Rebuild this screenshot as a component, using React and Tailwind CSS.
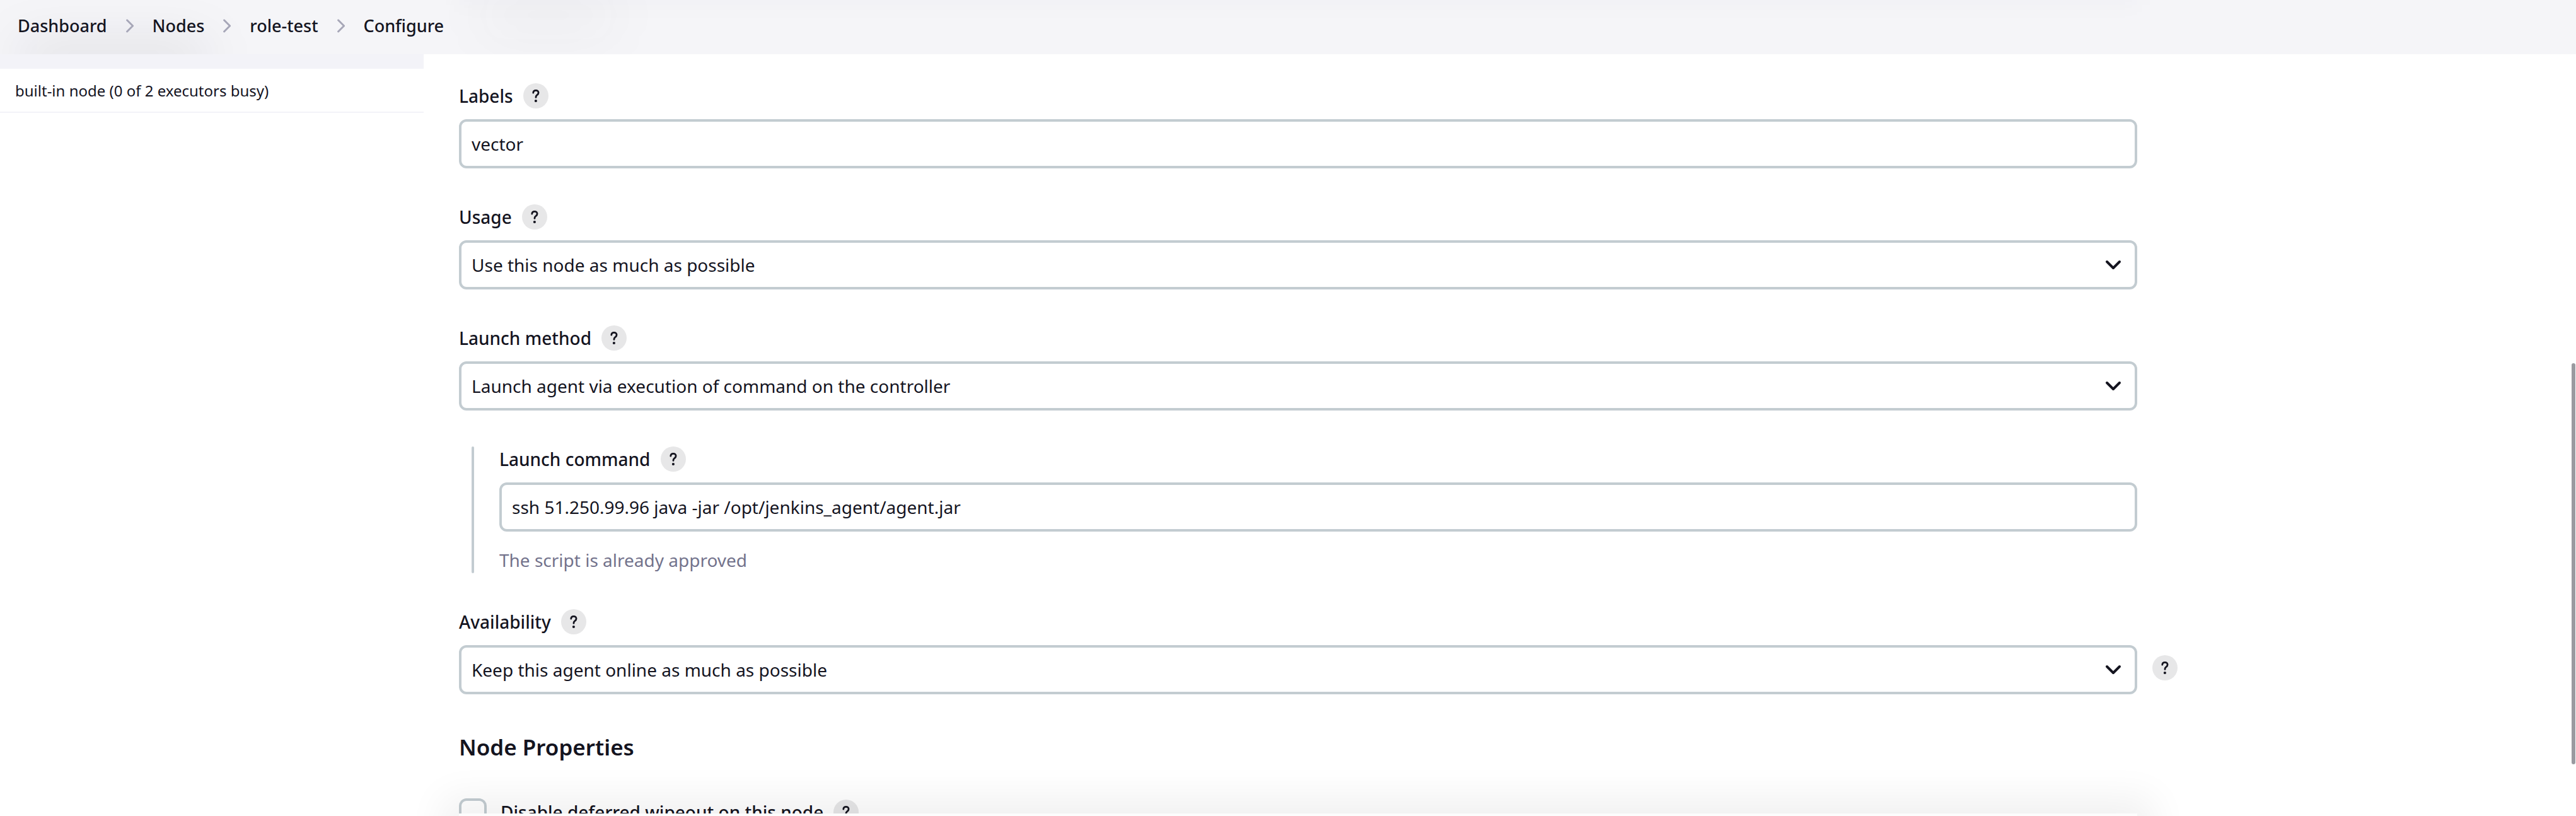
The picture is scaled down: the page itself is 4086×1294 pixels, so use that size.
import React from "react";

function HelpButton({ topic }) {
  return (
    <button
      type="button"
      aria-label={`Help for ${topic}`}
      className="flex size-10 shrink-0 items-center justify-center rounded-full bg-[#14141f]/10 text-[#14141f]"
    >
      <svg viewBox="0 0 40 40" className="size-10" fill="none" aria-hidden="true">
        <path
          d="M15.8 15.2c0-2.3 1.7-3.9 4.1-3.9 2.4 0 4.2 1.5 4.2 3.7 0 1.7-.8 2.6-2.2 3.6-1.4 1-1.9 1.7-1.9 3.2v.6"
          stroke="currentColor"
          strokeWidth="2.8"
          strokeLinecap="round"
          strokeLinejoin="round"
        />
        <circle cx="19.9" cy="28" r="2.1" fill="currentColor" />
      </svg>
    </button>
  );
}

function Field({ id, label, children }) {
  return (
    <div className="flex w-full max-w-[2662px] flex-col gap-[17px]">
      <div className="flex h-10 items-center gap-4">
        <label htmlFor={id} className="font-medium">
          {label}
        </label>
        <HelpButton topic={label} />
      </div>
      {children}
    </div>
  );
}

const boxClass =
  "h-[78px] w-full appearance-none rounded-xl border-4 border-[#c3ccd1] bg-white px-4 outline-none";

function TextInput({ id, value }) {
  return <input id={id} type="text" defaultValue={value} className={boxClass} />;
}

function SelectBox({ id, value }) {
  return (
    <div className="relative">
      <select id={id} className={boxClass}>
        <option>{value}</option>
      </select>
      <svg
        viewBox="0 0 28 18"
        className="pointer-events-none absolute top-[30px] right-6 h-[18px] w-7"
        fill="none"
        aria-hidden="true"
      >
        <path
          d="M4 4l10 10L24 4"
          stroke="currentColor"
          strokeWidth="4"
          strokeLinecap="round"
          strokeLinejoin="round"
        />
      </svg>
    </div>
  );
}

const crumbs = ["Dashboard", "Nodes", "role-test", "Configure"];

function Breadcrumbs() {
  return (
    <header className="relative z-10 h-[86px] shrink-0 overflow-hidden bg-[#f5f5f8]">
      <div className="absolute top-[72px] left-[30px] h-10 w-[300px] rounded-full bg-[#14141f]/12 blur-2xl" />
      <div className="absolute -top-4 left-[760px] h-20 w-[220px] rounded-full bg-[#14141f]/3 blur-2xl" />
      <div className="absolute -top-8 left-[728px] h-10 w-[2662px] bg-[#14141f]/2 blur-lg" />
      <nav aria-label="Breadcrumb" className="relative flex h-[82px] items-center px-7">
        <ol className="flex items-center gap-[30px] text-[27px] font-medium">
          {crumbs.map((name, i) => (
            <li key={name} className="flex items-center gap-[30px]">
              {i > 0 && (
                <svg viewBox="0 0 12 24" className="h-6 w-3" fill="none" aria-hidden="true">
                  <path
                    d="M1.600 3l9 9-9 9"
                    stroke="#a7a7b8"
                    strokeWidth="3"
                    strokeLinecap="round"
                    strokeLinejoin="round"
                  />
                </svg>
              )}
              <a href="#">{name}</a>
            </li>
          ))}
        </ol>
      </nav>
    </header>
  );
}

export default function App() {
  return (
    <div className="relative flex h-screen flex-col overflow-hidden bg-white font-['Noto_Sans',sans-serif] text-[28px] leading-[42px] text-[#14141f]">
      <Breadcrumbs />
      <div className="flex min-h-0 flex-1">
        <aside className="w-[672px] shrink-0">
          <div className="h-[23px] bg-[#f3f3f8]" />
          <div className="flex h-[70px] items-center border-b-2 border-[#f3f3f8] px-6 pt-0.5 text-2xl">
            <a href="#">built-in node (0 of 2 executors busy)</a>
          </div>
        </aside>
        <main className="min-w-0 flex-1 overflow-hidden">
          <form className="flex flex-col gap-[57px] pt-[46px] pl-14">
            <Field id="labels" label="Labels">
              <TextInput id="labels" value="vector" />
            </Field>
            <Field id="usage" label="Usage">
              <SelectBox id="usage" value="Use this node as much as possible" />
            </Field>
            <Field id="launch-method" label="Launch method">
              <SelectBox
                id="launch-method"
                value="Launch agent via execution of command on the controller"
              />
            </Field>
            <div className="flex max-w-[2662px] gap-10 pl-5">
              <div className="w-1 shrink-0 rounded-full bg-[#c3ccd1]" />
              <div className="flex-1">
                <Field id="launch-command" label="Launch command">
                  <TextInput
                    id="launch-command"
                    value="ssh 51.250.99.96 java -jar /opt/jenkins_agent/agent.jar"
                  />
                </Field>
                <p className="mt-6 text-[#73738c]">The script is already approved</p>
              </div>
            </div>
            <div className="flex items-end gap-6">
              <Field id="availability" label="Availability">
                <SelectBox id="availability" value="Keep this agent online as much as possible" />
              </Field>
              <div className="flex h-[84px] items-center">
                <HelpButton topic="availability options" />
              </div>
            </div>
            <section>
              <h2 className="text-[35px] leading-[54px] font-semibold">Node Properties</h2>
              <div className="mt-[54px] flex h-11 items-center">
                <input
                  id="wipeout"
                  type="checkbox"
                  className="size-11 appearance-none rounded-xl border-4 border-[#c3ccd1] bg-white"
                />
                <label htmlFor="wipeout" className="mr-4 ml-[22px] font-medium">
                  Disable deferred wipeout on this node
                </label>
                <HelpButton topic="deferred wipeout" />
              </div>
            </section>
          </form>
        </main>
      </div>
      <div className="pointer-events-none absolute inset-x-0 bottom-0 flex h-24 items-start overflow-hidden pt-[92px] pl-[728px]">
        <div className="h-24 w-full max-w-[2662px] shrink-0 bg-[#fdfdfd] shadow-[0_0_60px_26px_rgba(0,0,0,0.06)]" />
      </div>
      <div className="absolute top-[576px] right-px h-[636px] w-1.5 rounded-full bg-[#9a9aa0]" />
    </div>
  );
}
